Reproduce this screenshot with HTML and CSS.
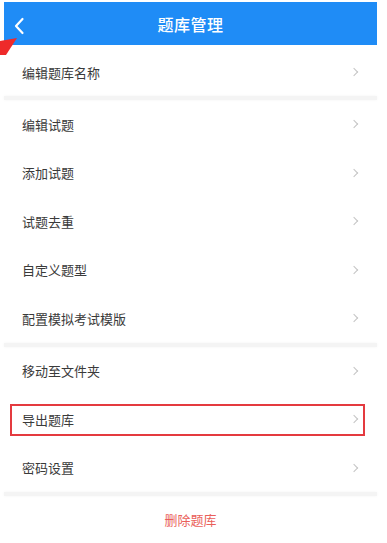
FILE: index.html
```html
<!DOCTYPE html>
<html lang="zh-CN">
<head>
  <meta charset="UTF-8">
  <title>题库管理</title>
  <link rel="stylesheet" href="styles.css">
</head>
<body>
  <div class="screen">
    <header class="topbar">
      <svg class="back" width="12" height="18" viewBox="0 0 12 18"><path d="M9.5 2 L3 9 L9.5 16" fill="none" stroke="#fff" stroke-width="2.2" stroke-linecap="round" stroke-linejoin="round"/></svg>
      <h1 class="title">题库管理</h1>
    </header>

    <ul class="group">
      <li class="row first">编辑题库名称<span class="arrow"></span></li>
    </ul>
    <div class="gap"></div>
    <ul class="group">
      <li class="row">编辑试题<span class="arrow"></span></li>
      <li class="row">添加试题<span class="arrow"></span></li>
      <li class="row">试题去重<span class="arrow"></span></li>
      <li class="row">自定义题型<span class="arrow"></span></li>
      <li class="row">配置模拟考试模版<span class="arrow"></span></li>
    </ul>
    <div class="gap"></div>
    <ul class="group">
      <li class="row">移动至文件夹<span class="arrow"></span></li>
      <li class="row marked">导出题库<span class="arrow"></span></li>
      <li class="row">密码设置<span class="arrow"></span></li>
    </ul>
    <div class="gap"></div>
    <div class="delete">删除题库</div>
  </div>

  <!-- red pointer drawn on top of the screenshot -->
  <svg class="pointer" width="20" height="20" viewBox="0 0 20 20"><polygon points="0,3 17,0 6,17 0,17" fill="#ee2a2a"/></svg>
</body>
</html>
```

FILE: styles.css
```css
* {
  box-sizing: border-box;
}
html, body {
  margin: 0;
  padding: 0;
  background: #fff;
}
body {
  font-family: "Noto Sans CJK SC", "Noto Sans", sans-serif;
  width: 387px;
  height: 543px;
  overflow: hidden;
  position: relative;
}
.screen {
  width: 373px;
  margin: 2px 0 0 4px;
}
.topbar {
  height: 43px;
  background: #1f8cf6;
  display: flex;
  align-items: center;
  justify-content: center;
  position: relative;
}
.back {
  position: absolute;
  left: 9px;
  top: 15px;
}
.title {
  margin: 0;
  color: #fff;
  font-size: 16px;
  font-weight: 500;
  letter-spacing: 0.5px;
}
.group {
  list-style: none;
  margin: 0;
  padding: 0;
}
.row {
  height: 48.5px;
  display: flex;
  align-items: center;
  justify-content: space-between;
  padding: 0 20px 0 18px;
  font-size: 13px;
  color: #3a3a3a;
  position: relative;
}
.row.first {
  height: 51px;
  padding-top: 3px;
}
.arrow {
  width: 6px;
  height: 6px;
  border-top: 1px solid #c4c4c4;
  border-right: 1px solid #c4c4c4;
  transform: rotate(45deg);
}
.row.marked::after {
  content: "";
  position: absolute;
  left: 6px;
  right: 12px;
  top: 9px;
  bottom: 8px;
  border: 2px solid #e43a3f;
}
.gap {
  height: 4px;
  background: #f4f4f4;
  box-shadow: 0 0 3px #f4f4f4;
}
.delete {
  height: 47px;
  display: flex;
  align-items: center;
  justify-content: center;
  color: #ea5f5a;
  font-size: 13px;
}
.pointer {
  position: absolute;
  left: 0;
  top: 38px;
}
```
